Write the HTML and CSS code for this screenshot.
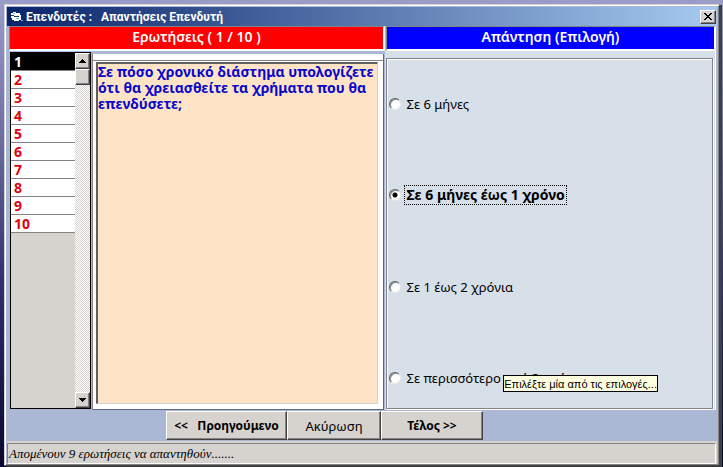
FILE: index.html
```html
<!DOCTYPE html>
<html lang="el">
<head>
<meta charset="utf-8">
<title>Επενδυτές : Απαντήσεις Επενδυτή</title>
<link rel="stylesheet" href="styles.css">
</head>
<body>
<main class="window">
  <header class="titlebar">
    <svg class="app-icon" width="13" height="12" viewBox="0 0 13 12" aria-hidden="true">
      <path d="M1 2h2V1h3v1h4v2h1v5H9v1H4V9H2V7H1z" fill="#fff"/>
      <path d="M1 4h3v1h5v1H4V5H1z" fill="#123a78"/>
      <path d="M3 2h2v1H3zM6 7h3v1H6z" fill="#58c8d8"/>
      <path d="M11 9h2v1h-2z" fill="#9aa8c8"/>
    </svg>
    <h1 class="title">Επενδυτές :&nbsp;&nbsp; Απαντήσεις Επενδυτή</h1>
    <button class="close" type="button" aria-label="Κλείσιμο">
      <svg width="8" height="7" viewBox="0 0 8 7" shape-rendering="crispEdges"><path d="M0 0h2v1h1v1h2V1h1V0h2v1H7v1H6v1H5v1h1v1h1v1h1v1H6V6H5V5H3v1H2v1H0V6h1V5h1V4h1V3H2V2H1V1H0z"/></svg>
    </button>
  </header>
  <div class="heads">
    <h2 class="head head-red">Ερωτήσεις ( 1 / 10 )</h2>
    <h2 class="head head-blue">Απάντηση (Επιλογή)</h2>
  </div>
  <div class="content">
    <div class="left">
      <div class="list">
        <div class="rows">
          <button type="button" class="row selected">1</button>
          <button type="button" class="row">2</button>
          <button type="button" class="row">3</button>
          <button type="button" class="row">4</button>
          <button type="button" class="row">5</button>
          <button type="button" class="row">6</button>
          <button type="button" class="row">7</button>
          <button type="button" class="row">8</button>
          <button type="button" class="row">9</button>
          <button type="button" class="row">10</button>
        </div>
        <div class="scroll">
          <button type="button" class="scroll-btn" aria-label="Πάνω"><svg width="7" height="4" viewBox="0 0 7 4" shape-rendering="crispEdges"><path d="M3 0h1v1h1v1h1v1h1v1H0V3h1V2h1V1h1z"/></svg></button>
          <div class="thumb"></div>
          <button type="button" class="scroll-btn down" aria-label="Κάτω"><svg width="7" height="4" viewBox="0 0 7 4" shape-rendering="crispEdges"><path d="M0 0h7v1H6v1H5v1H4v1H3V3H2V2H1V1H0z"/></svg></button>
        </div>
      </div>
      <div class="question">
        <textarea class="question-text" aria-label="Ερώτηση" readonly>Σε πόσο χρονικό διάστημα υπολογίζετε
ότι θα χρειασθείτε τα χρήματα που θα
επενδύσετε;</textarea>
      </div>
    </div>
    <div class="right">
      <fieldset class="answers" aria-label="Απάντηση">
        <label class="option"><input type="radio" name="answer"><span>Σε 6 μήνες</span></label>
        <label class="option"><input type="radio" name="answer" checked><span>Σε 6 μήνες έως 1 χρόνο</span></label>
        <label class="option"><input type="radio" name="answer"><span>Σε 1 έως 2 χρόνια</span></label>
        <label class="option"><input type="radio" name="answer"><span>Σε περισσότερο από 2 χρόνια</span></label>
      </fieldset>
      <div class="tooltip" role="tooltip">Επιλέξτε μία από τις επιλογές...</div>
    </div>
  </div>
  <div class="actions">
    <button type="button" class="btn prev">&lt;&lt;&nbsp;&nbsp; Προηγούμενο</button>
    <button type="button" class="btn cancel">Ακύρωση</button>
    <button type="button" class="btn end">Τέλος &gt;&gt;</button>
  </div>
  <footer class="status"><p class="status-text">Απομένουν 9 ερωτήσεις να απαντηθούν.......</p></footer>
</main>
</body>
</html>
```
FILE: styles.css
```css
* { box-sizing: border-box; }
html, body { height: 100%; margin: 0; }
body {
  padding: 4px 3px 1px 4px;
  background: linear-gradient(#9a9cc8 0 5px, transparent 5px), linear-gradient(#9a9ccc 0, #6c6ca0 30%, #303070 60%, #080830);
  font-family: "Noto Sans", sans-serif;
  color: #000;
}
button, input, textarea { font: inherit; margin: 0; padding: 0; color: inherit; border-radius: 0; }
h1, h2, p { margin: 0; }
.window {
  display: flex;
  flex-direction: column;
  height: 100%;
  background: #aab8d6;
  border: 1px solid #d6d3ce;
  border-right-color: #404040;
  border-bottom-color: #404040;
  box-shadow: inset 1px 1px #fff, inset -1px -1px #848284, 2px 1px #404040;
  padding: 2px 2px 1px;
}
.titlebar {
  display: flex;
  align-items: center;
  height: 19px;
  flex: none;
  padding: 0 1px 0 3px;
  background: linear-gradient(90deg, #0a246a, #a6caf0);
}
.title { flex: 1; margin-left: 3px; font: 700 12px/18px Roboto, sans-serif; color: #fff; }
.close {
  display: flex;
  align-items: center;
  justify-content: center;
  width: 16px;
  height: 14px;
  background: #d6d3ce;
  border: 1px solid #fff;
  border-right-color: #404040;
  border-bottom-color: #404040;
  box-shadow: inset -1px -1px #848284;
}
.heads, .content { display: grid; grid-template-columns: 377fr 331fr; margin: 0 1px 0 2px; }
.heads { flex: none; gap: 1px; }
.head {
  height: 25px;
  border: 1px solid #848284;
  border-right: 2px solid #fff;
  border-bottom: 2px solid #fff;
  font-size: 14px;
  line-height: 20px;
  font-weight: 600;
  color: #fff;
  text-align: center;
}
.head-red { background: #f00; }
.head-blue { background: #00f; }
.content { flex: 1; min-height: 0; }
.left { display: flex; min-width: 0; padding: 1px 1px 0 1px; }
.list {
  display: flex;
  width: 81px;
  flex: none;
  margin-bottom: 1px;
  border: 1px solid #000;
  background: #d6d3ce;
}
.rows { flex: 1; display: flex; flex-direction: column; }
.row {
  height: 18px;
  flex: none;
  border: 0;
  border-bottom: 1px solid #848284;
  padding-left: 3px;
  background: #fff;
  color: #e00010;
  font-size: 14px;
  line-height: 17px;
  font-weight: 700;
  text-align: left;
}
.selected { background: #000; color: #fff; }
.scroll {
  display: flex;
  flex-direction: column;
  width: 15px;
  background: repeating-conic-gradient(#fff 0 25%, #d6d3ce 0 50%) 0 0 / 2px 2px;
}
.scroll-btn, .thumb {
  height: 16px;
  flex: none;
  background: #d6d3ce;
  border: 1px solid #fff;
  border-right-color: #404040;
  border-bottom-color: #404040;
  box-shadow: inset -1px -1px #848284;
}
.scroll-btn { display: flex; align-items: center; justify-content: center; }
.down { margin-top: auto; }
.question {
  flex: 1;
  min-width: 0;
  display: flex;
  margin: 2px 0 0 1px;
  padding: 8px 5px 5px 3px;
  background: linear-gradient(#848284, #848284) 0 6px / 100% 1px no-repeat, #fff;
  border-left: 1px solid #848284;
  border-right: 1px solid #5c6880;
  border-bottom: 1px solid #5c6880;
}
.question-text {
  flex: 1;
  min-width: 0;
  resize: none;
  overflow: hidden;
  white-space: pre;
  border: 2px solid #606060;
  border-right: 1px solid #d6d3ce;
  border-bottom: 1px solid #d6d3ce;
  background: #ffe3c6;
  color: #0808c8;
  font-size: 14px;
  line-height: 16px;
  font-weight: 700;
}
.right {
  position: relative;
  display: flex;
  background: #d7dfe8;
  padding: 7px 2px 1px 1px;
  border-right: 1px solid #fff;
}
.answers {
  flex: 1;
  min-width: 0;
  display: flex;
  flex-direction: column;
  justify-content: space-between;
  margin: 0;
  padding: 35px 2px 20px;
  border: 1px solid #848284;
  box-shadow: inset 1px 1px #fff, 1px 1px #fff;
}
.option { display: flex; align-items: center; gap: 3px; font-size: 13px; line-height: 18px; }
.option span { padding: 0 1px; border: 1px solid transparent; }
.option input {
  appearance: none;
  width: 12px;
  height: 12px;
  border: 1px solid #606060;
  border-right-color: #e8e8e8;
  border-bottom-color: #e8e8e8;
  border-radius: 50%;
  background: #fff;
  box-shadow: inset 1px 1px #909090;
}
.option input:checked { background: radial-gradient(circle, #000 0 2px, #fff 3px); }
.option input:checked + span { font-size: 14px; font-weight: 700; border: 1px dotted #000; }
.tooltip {
  position: absolute;
  right: 57px;
  bottom: 18px;
  height: 17px;
  border: 1px solid #000;
  background: #ffffe1;
  font: 11px/16px "Liberation Sans", sans-serif;
  white-space: nowrap;
}
.actions { display: flex; flex: none; padding: 1px 0 1px 159px; }
.btn {
  height: 29px;
  border: 1px solid #fff;
  border-right: 1px solid #404040;
  border-bottom: 1px solid #404040;
  box-shadow: inset -1px -1px #848284;
  background: #d6d3ce;
  font-size: 12px;
  font-weight: 700;
  white-space: nowrap;
}
.prev { width: 121px; }
.cancel { width: 94px; font-size: 13px; font-weight: 400; }
.end { width: 102px; }
.status { flex: none; padding: 2px 1px 0 0; background: #d6d3ce; }
.status-text {
  height: 21px;
  padding-left: 1px;
  border: 1px solid #848284;
  border-right-color: #fff;
  border-bottom-color: #fff;
  font: italic 13px/20px "Liberation Serif", serif;
}
```
